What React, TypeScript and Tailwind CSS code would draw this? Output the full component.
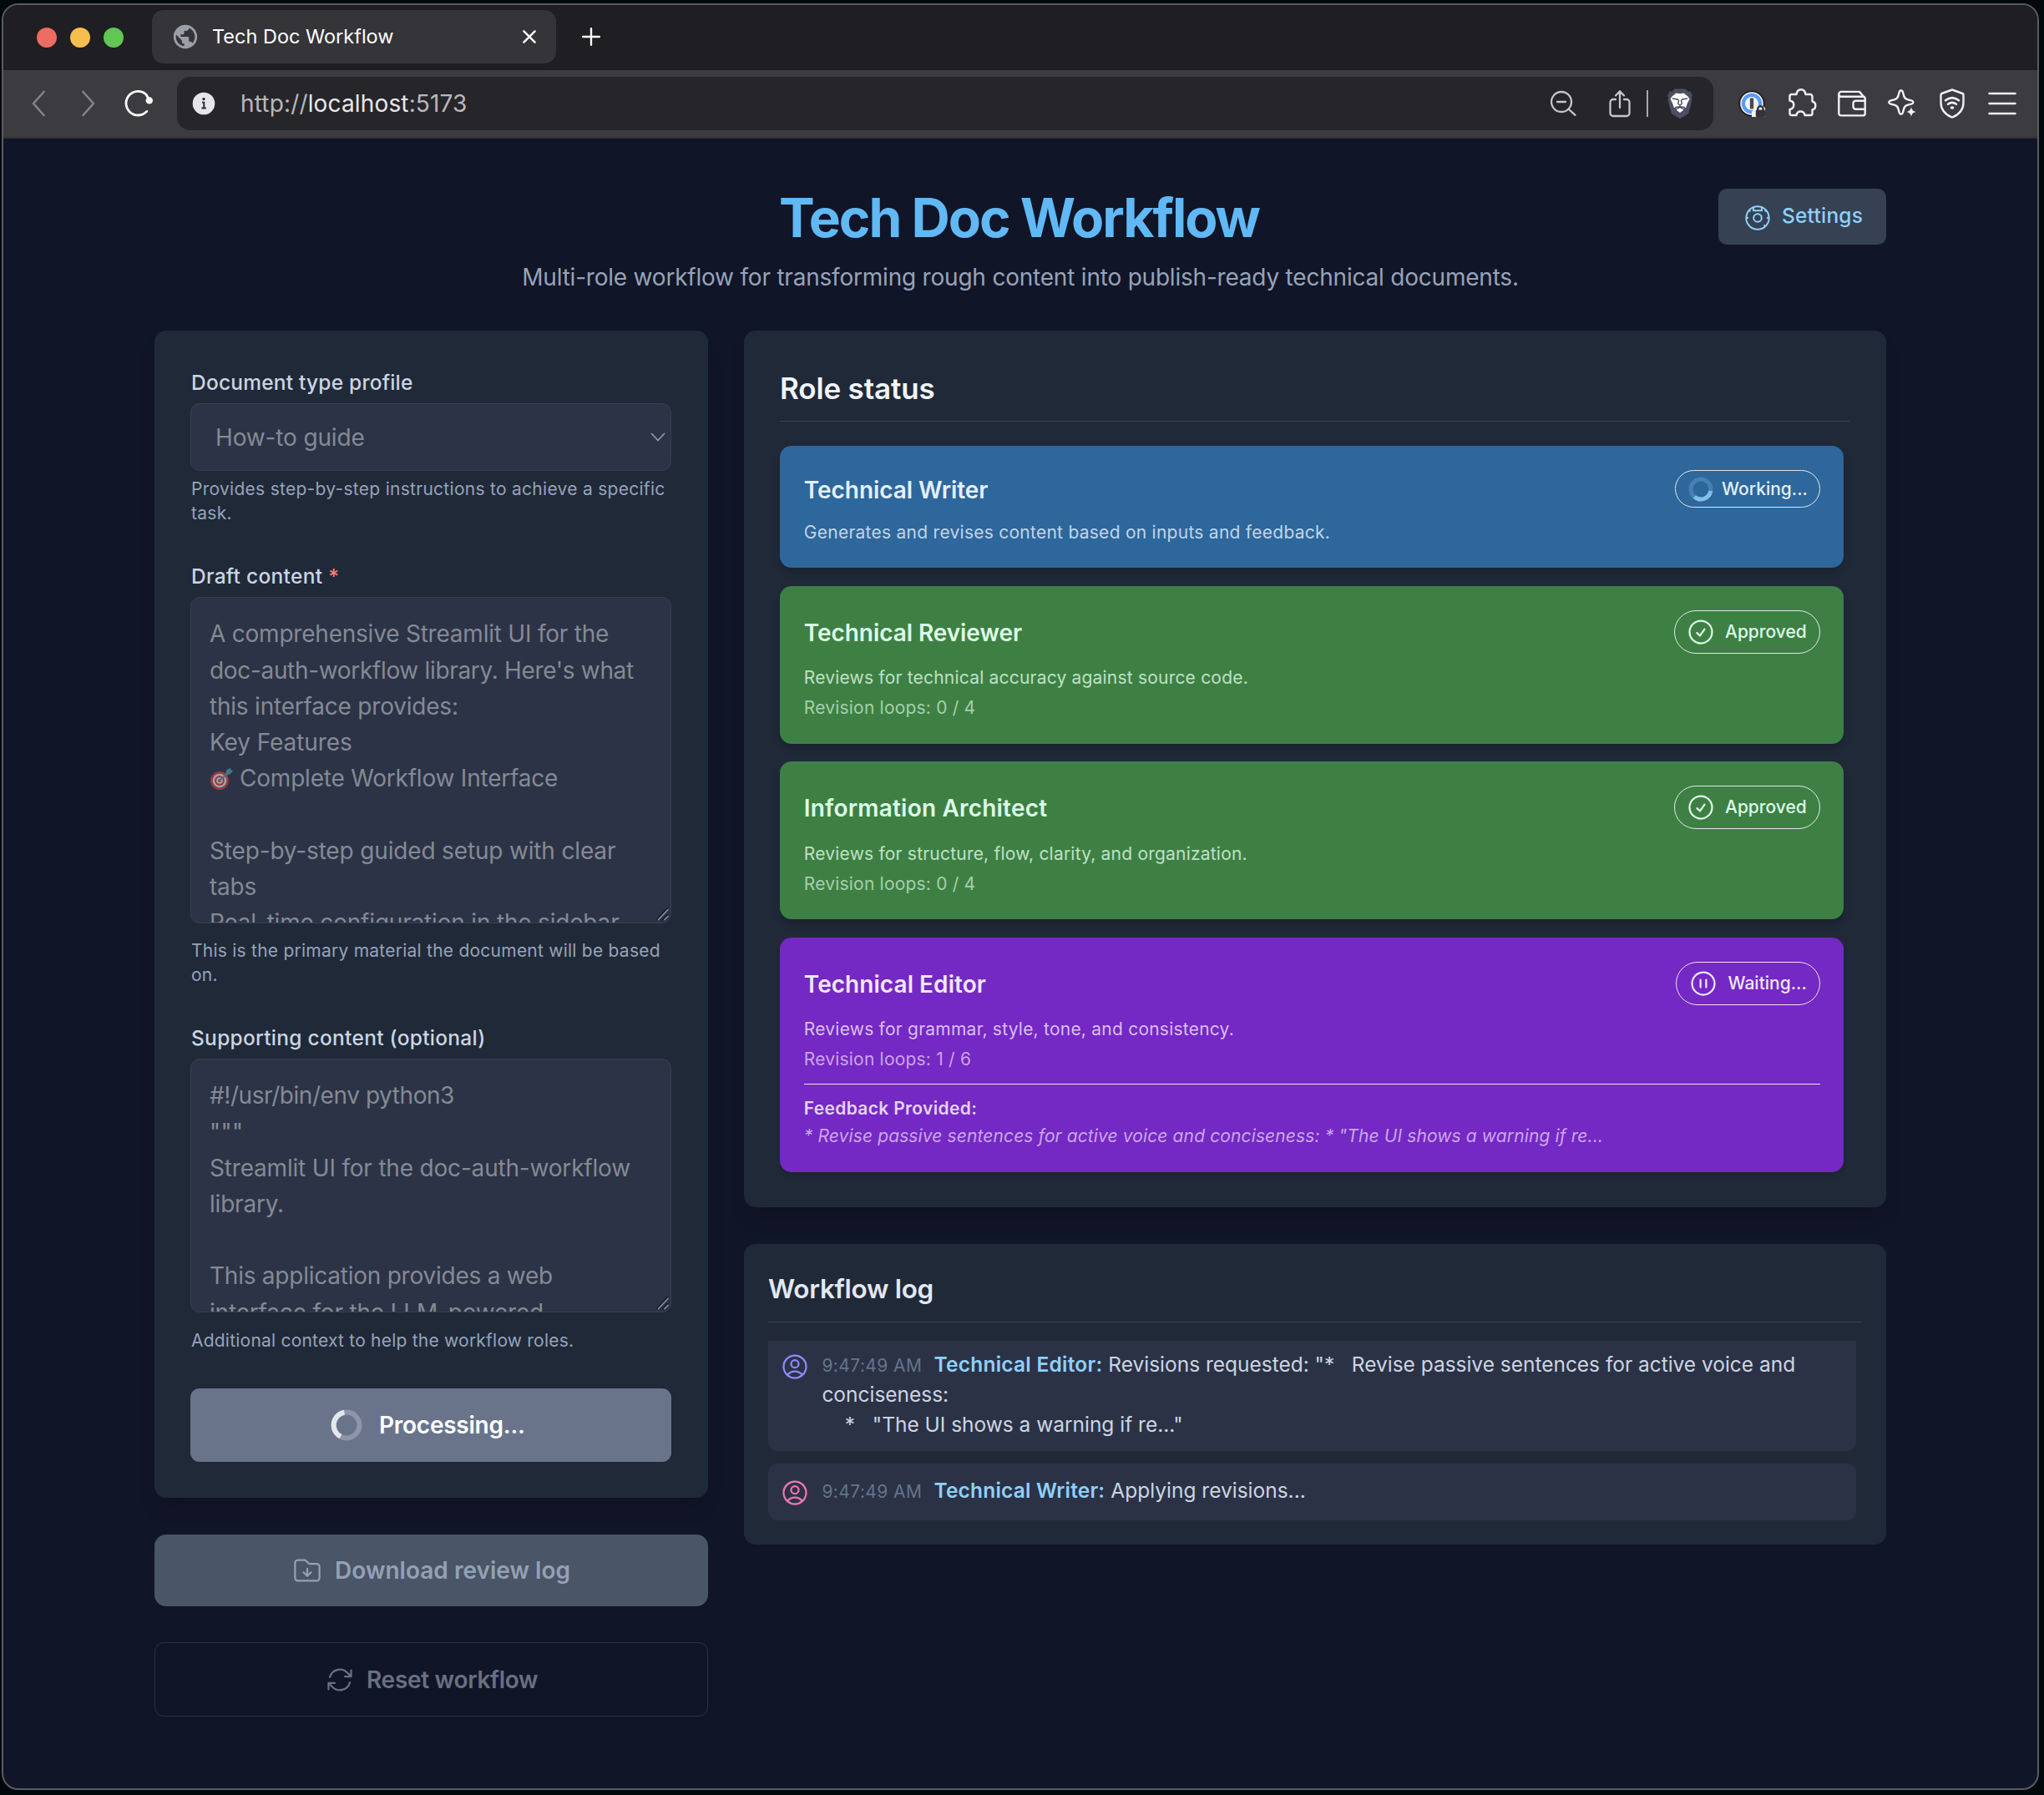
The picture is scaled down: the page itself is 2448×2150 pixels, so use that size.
import React from "react";
import {
  HiOutlineUserCircle,
  HiOutlineCheckCircle,
  HiOutlinePauseCircle,
  HiOutlineFolderArrowDown,
  HiOutlineArrowPath,
} from "react-icons/hi2";
import { MdPublic } from "react-icons/md";

/* ---------- browser chrome ---------- */

function TabStrip() {
  return (
    <div className="flex h-[78px] shrink-0 items-start bg-[#1f1e22]">
      <div className="mt-[27px] ml-[40px] flex gap-4">
        <span className="size-6 rounded-full bg-[#ed6b60]" />
        <span className="size-6 rounded-full bg-[#f5be4f]" />
        <span className="size-6 rounded-full bg-[#62c655]" />
      </div>
      <div className="mt-[6px] ml-[34px] flex h-16 w-[484px] items-center rounded-[14px] bg-[#353439] pr-[24px] pl-[23px]">
        <MdPublic className="size-[34px] text-[#9aa0a6]" />
        <span className="ml-[15px] text-[23.5px] leading-none text-white">Tech Doc Workflow</span>
        <svg viewBox="0 0 16 16" className="ml-auto size-4 text-white" fill="none" stroke="currentColor" strokeWidth="2.4" strokeLinecap="round">
          <path d="M1.4 1.4l13.2 13.2M14.6 1.4L1.4 14.6" />
        </svg>
      </div>
      <svg viewBox="0 0 22 22" className="mt-[27px] ml-[31px] size-[22px] text-white" fill="none" stroke="currentColor" strokeWidth="2.4" strokeLinecap="round">
        <path d="M11 1.2v19.6M1.2 11h19.6" />
      </svg>
    </div>
  );
}

function PuzzleIcon() {
  return (
    <svg viewBox="-2 0 36 36" className="size-9" fill="none" stroke="#f0f0f2" strokeWidth="2.4" strokeLinejoin="round">
      <path d="M3.5 7H9.5C10 3.5 12 1.2 15 1.2S20 3.5 20.5 7H26a2.5 2.5 0 0 1 2.5 2.5V15.5C31 16 32.3 18 32.3 20.5S31 25 28.5 25.5V30a2 2 0 0 1-2 2H19.5C19 29 17 27.5 14.5 27.5S10 29 9.5 32H3.5a2 2 0 0 1-2-2V25C4.5 24.5 6.3 22.5 6.3 19.5S4.5 15 1.5 14.5V9a2 2 0 0 1 2-2z" />
    </svg>
  );
}

function WalletIcon() {
  return (
    <svg viewBox="-1 -2.7 36 36" className="size-9" fill="none" stroke="#f0f0f2" strokeWidth="2.4" strokeLinejoin="round" strokeLinecap="round">
      <path d="M1.3 3.7V27A2.7 2.7 0 0 0 4 29.7H30A2.7 2.7 0 0 0 32.7 27V9.5A2.5 2.5 0 0 0 30.2 7H4A2.7 2.7 0 0 1 1.3 4.2A2.8 2.8 0 0 1 4 1.2H26L30.5 6.5" />
      <path d="M32.7 12H21.5a3 3 0 0 0-3 3v4a3 3 0 0 0 3 3H32.7" />
    </svg>
  );
}

function SparkIcon() {
  return (
    <svg viewBox="-1 0 36 36" className="size-9" fill="none" stroke="#f0f0f2" strokeWidth="2.4" strokeLinejoin="round">
      <path d="M15.8 2.2c1 0 1.7.7 2 1.7l1.5 5.3c.6 2 1.900 3.300 3.900 3.900l5.600 1.600c2 .7 2 2.900 0 3.600l-5.600 1.600c-2 .6-3.300 1.900-3.900 3.900l-1.500 5.300c-.7 2.200-3.300 2.200-4 0l-1.500-5.300c-.6-2-1.900-3.300-3.900-3.900l-5.600-1.600c-2-.7-2-2.900 0-3.600l5.600-1.600c2-.6 3.300-1.900 3.900-3.900l1.500-5.300c.3-1 1-1.700 2-1.700z" />
      <path d="M28 22.300c.9 3.600 2 4.700 5.600 5.700-3.600 1-4.700 2.100-5.600 5.700-.9-3.600-2-4.700-5.600-5.700 3.600-1 4.700-2.100 5.600-5.700z" fill="#f0f0f2" stroke="none" />
    </svg>
  );
}

function ShieldWifiIcon() {
  return (
    <svg viewBox="-3 0 36 36" className="size-9" fill="none" stroke="#f0f0f2" strokeWidth="2.4" strokeLinejoin="round" strokeLinecap="round">
      <path d="M15 1.500L27.500 6a1.500 1.500 0 0 1 1 1.400V17c0 8-4.500 13.500-12.400 17.200a2.500 2.500 0 0 1-2.200 0C6 30.500 1.500 25 1.500 17V7.400A1.500 1.500 0 0 1 2.500 6z" />
      <path d="M7 14.300c5-4 11-4 16 0M10 18.800c3.200-2.500 6.800-2.500 10 0" strokeWidth="2.6" />
      <ellipse cx="15" cy="23" rx="2.400" ry="1.800" fill="#f0f0f2" stroke="none" />
    </svg>
  );
}

function PasswordIcon() {
  return (
    <svg viewBox="-18 -18 36 36" className="size-9">
      <circle r="15.600" fill="#1d1c20" />
      <circle r="13.800" fill="#f3f5f9" />
      <circle r="10" fill="none" stroke="#5b9bf5" strokeWidth="4.400" />
      <circle r="7.800" fill="#f3f5f9" />
      <rect x="-2.200" y="-6.500" width="4.400" height="13" rx="1" fill="#4a4a4f" />
      <path d="M0 16V10L6 2.500h7l3 3V16z" fill="#f3f5f9" />
      <rect x="4.800" y="7.500" width="11.200" height="8.500" rx="1.500" fill="#343436" />
      <path d="M7.200 8.500V6.500a3.200 3.200 0 0 1 6.400 0v2" fill="none" stroke="#343436" strokeWidth="2.4" />
    </svg>
  );
}

function LionIcon() {
  return (
    <svg viewBox="0 0 30 36" className="h-9 w-[30px]">
      <path d="M8.500 0.500h13l3 3.300 3-.3 2.300 4.500-1 3 .6 3L26 27.500c-.5 1.700-1.600 3-3 4L15 36l-8-4.500c-1.400-1-2.500-2.300-3-4L.6 14l.6-3-1-3 2.300-4.500 3 .3z" fill="#4c4e61" />
      <path d="M10.500 5.500L15 6.300l4.500-.8 5 4 2 3-3 6.300-1.200 4L18.500 24 19 26l-4 3-4-3 .5-2-3.800-1.200-1.200-4-3-6.300 2-3z" fill="#fff" />
      <path d="M6 12l6 1 1.500 1.500-.8 3.800L15 20l2.300-1.700-.8-3.800L18 13l6-1M15 20v2.500M9 22.800l6-1 6 1M11.500 24.300l3.500-2 3.500 2" fill="none" stroke="#4c4e61" strokeWidth="1.400" />
    </svg>
  );
}

function Toolbar() {
  return (
    <div className="flex h-[82px] shrink-0 items-center border-b-2 border-[#323135] bg-[#3c3b3f]">
      <svg viewBox="0 0 16 32" className="ml-[34px] h-8 w-4" fill="none" stroke="#85848a" strokeWidth="2.6" strokeLinecap="round" strokeLinejoin="round">
        <path d="M14.500 2L2 16l12.500 14" />
      </svg>
      <svg viewBox="0 0 16 32" className="ml-[44px] h-8 w-4" fill="none" stroke="#85848a" strokeWidth="2.6" strokeLinecap="round" strokeLinejoin="round">
        <path d="M1.500 2L14 16 1.500 30" />
      </svg>
      <svg viewBox="-18 -18 36 36" className="ml-[33px] size-9" fill="none" stroke="#fff" strokeWidth="2.8" strokeLinecap="round">
        <path d="M10.800 9.400A14.300 14.300 0 1 1 10 -10.800L13.500 -5" />
        <circle cx="13.800" cy="-3.600" r="4.200" fill="#fff" stroke="none" />
      </svg>
      <div className="ml-[29px] flex h-16 w-[1840px] items-center rounded-2xl bg-[#26252a]">
        <svg viewBox="0 0 28 28" className="ml-[18px] size-7">
          <circle cx="14" cy="14" r="13.300" fill="#e6e5ea" />
          <circle cx="14" cy="8.600" r="1.700" fill="#26252a" />
          <path d="M12 12.600h2.300v6.600M11.500 19.500h5.300" stroke="#26252a" strokeWidth="1.900" fill="none" />
        </svg>
        <span className="ml-[30px] text-[28px] leading-none tracking-[0.15px] whitespace-nowrap text-[#b9b8be]">
          http://<span className="text-[#e8e7ec]">localhost</span>:5173
        </span>
        <svg viewBox="1 0 32 32" className="ml-auto size-8" fill="none" stroke="#c6c5ca" strokeWidth="2.3" strokeLinecap="round">
          <circle cx="14" cy="14" r="12" />
          <path d="M9 14h10M23 23l7.500 6.800" />
        </svg>
        <svg viewBox="0 0 26 34" className="ml-[38px] h-[34px] w-[26px]" fill="none" stroke="#c6c5ca" strokeWidth="2.3" strokeLinecap="round" strokeLinejoin="round">
          <path d="M8 12H5a3.500 3.500 0 0 0-3.500 3.500v13A3.500 3.500 0 0 0 5 32h16a3.500 3.500 0 0 0 3.500-3.500v-13A3.500 3.500 0 0 0 21 12h-3M13 22V2.500M8 7.500l5-5.300 5 5.300" />
        </svg>
        <span className="ml-[19px] h-8 w-[2px] bg-[#a9a8ad]" />
        <span className="mr-[25px] ml-[23px]">
          <LionIcon />
        </span>
      </div>
      <div className="ml-[28px] flex items-center gap-6">
        <PasswordIcon />
        <PuzzleIcon />
        <WalletIcon />
        <SparkIcon />
        <ShieldWifiIcon />
        <svg viewBox="0 0 36 36" className="size-9" fill="none" stroke="#f0f0f2" strokeWidth="2.6" strokeLinecap="round">
          <path d="M2.500 6h31M2.500 18h31M2.500 30h31" />
        </svg>
      </div>
    </div>
  );
}

/* ---------- page header ---------- */

function DialIcon() {
  return (
    <svg viewBox="-16 -16 32 32" className="mt-[2px] size-8" fill="none" stroke="currentColor" strokeWidth="2">
      <circle r="13.700" />
      <circle r="4.800" />
      <path d="M-5 -12.500V-8.800H5V-12.500M-14 0h3M11 0h3M-10.500 -9.500l2 1.600M10.500 -9.500l-2 1.600M9 10L7.500 8.500" />
    </svg>
  );
}

function Header() {
  return (
    <header className="grid grid-cols-[201px_1fr_201px]">
      <div />
      <div className="text-center">
        <h1 className="mr-[3px] text-[64px] leading-[72px] font-bold tracking-[-2px] text-[#60b9f5]">Tech Doc Workflow</h1>
        <p className="mt-[14px] text-[28px] leading-[43px] tracking-[-0.21px] text-[#96a3b8]">
          Multi-role workflow for transforming rough content into publish-ready technical documents.
        </p>
      </div>
      <button className="mt-px flex h-[67px] items-center rounded-[10px] bg-[#364153] pl-[31px] text-[#8fd0f9]">
        <DialIcon />
        <span className="mb-[3px] ml-[13px] text-[24.5px] leading-none font-medium tracking-[0.2px]">Settings</span>
      </button>
    </header>
  );
}

/* ---------- left column ---------- */

function Label({ children, className }: { children: React.ReactNode; className: string }) {
  return <div className={"text-[24.5px] leading-9 font-medium whitespace-nowrap text-[#cbd5e1] " + className}>{children}</div>;
}

function TargetIcon() {
  return (
    <svg viewBox="0 0 28 28" className="-mt-[3px] mr-[8px] inline-block size-7 opacity-70">
      <circle cx="12" cy="16" r="11" fill="#c4413f" />
      <circle cx="12" cy="16" r="8.200" fill="#d8d8dc" />
      <circle cx="12" cy="16" r="6" fill="#c4413f" />
      <circle cx="12" cy="16" r="3.800" fill="#d8d8dc" />
      <circle cx="12" cy="16" r="1.900" fill="#c4413f" />
      <path d="M12 16L24 5" stroke="#4c8f9c" strokeWidth="2.2" />
      <path d="M19 8.500L20 3.500 25 0.500 25.500 3 28 4.500 24.500 8.500 20 9.500z" fill="#4c93a0" />
    </svg>
  );
}

function ResizeGrip() {
  return (
    <svg viewBox="0 0 16 16" className="absolute right-px bottom-0.5 size-4" fill="none">
      <path d="M0 15L14 0M7 15L14 8" stroke="#151b28" strokeWidth="1.5" />
      <path d="M2 15L14.500 2M9.500 15L14.500 10" stroke="#8d939e" strokeWidth="1.5" />
    </svg>
  );
}

type Line = { text: string; className?: string; target?: boolean };

const draftLines: Line[] = [
  { text: "A comprehensive Streamlit UI for the", className: "tracking-[-0.22px]" },
  { text: "doc-auth-workflow library. Here's what", className: "tracking-[-0.33px]" },
  { text: "this interface provides:", className: "tracking-[-0.21px]" },
  { text: "Key Features", className: "tracking-[-0.09px]" },
  { text: "Complete Workflow Interface", className: "tracking-[-0.21px]", target: true },
  { text: "" },
  { text: "Step-by-step guided setup with clear", className: "tracking-[-0.16px]" },
  { text: "tabs", className: "tracking-[-0.2px]" },
  { text: "Real-time configuration in the sidebar", className: "tracking-[-0.19px]" },
];

const supportingLines: Line[] = [
  { text: "#!/usr/bin/env python3", className: "tracking-[-0.44px]" },
  { text: '"""', className: "tracking-[0.45px]" },
  { text: "Streamlit UI for the doc-auth-workflow", className: "tracking-[-0.19px]" },
  { text: "library.", className: "tracking-[-0.2px]" },
  { text: "" },
  { text: "This application provides a web", className: "tracking-[-0.24px]" },
  { text: "interface for the LLM-powered", className: "tracking-[-0.19px]" },
];

function Area({ lines, className }: { lines: Line[]; className: string }) {
  return (
    <div className={"relative mt-[7px] overflow-hidden rounded-[11px] border border-[#364052] bg-[#2c3346] pt-[22.4px] pl-[22px] text-[28px] leading-[43.2px] whitespace-pre text-[#848a95] " + className}>
      {lines.map((line, i) => (
        <div key={i} className="h-[43.2px]">
          {line.target && <TargetIcon />}
          <span className={line.className}>{line.text}</span>
        </div>
      ))}
      <ResizeGrip />
    </div>
  );
}

function Helper({ children, className }: { children: React.ReactNode; className: string }) {
  return <div className={"pl-px text-[21px] leading-[29px] whitespace-nowrap text-[#96a3b8] " + className}>{children}</div>;
}

function LeftColumn() {
  return (
    <div className="w-[663px] shrink-0">
      <div className="rounded-[14px] bg-[#202938] pt-[44px] pr-[44px] pb-[43px] pl-[43px] shadow-[0_16px_24px_-6px_rgba(0,0,0,0.16)]">
        <Label className="pl-px tracking-[0.21px]">Document type profile</Label>
        <div className="mt-[7px] flex h-[81px] items-center rounded-[11px] border border-[#364052] bg-[#2c3346] pr-[6px] pl-[29px] text-[28px] text-[#848a95]">
          <span className="tracking-[-0.15px]">How-to guide</span>
          <svg viewBox="0 0 18 11" className="ml-auto h-[11px] w-[18px]" fill="none" stroke="#9298a3" strokeWidth="1.8" strokeLinecap="round">
            <path d="M1.500 1.500L9 9.500l7.500-8" />
          </svg>
        </div>
        <Helper className="mt-[7px] tracking-[0.28px]">
          Provides step-by-step instructions to achieve a specific
          <br />
          task.
        </Helper>

        <Label className="mt-[43px] pl-px tracking-[0.3px]">
          Draft content <span className="text-[#f07f7b]">*</span>
        </Label>
        <Area className="h-[391px]" lines={draftLines} />
        <Helper className="mt-[18px] tracking-[0.24px]">
          This is the primary material the document will be based
          <br />
          on.
        </Helper>

        <Label className="mt-[43px] pl-px tracking-[0.28px]">Supporting content (optional)</Label>
        <Area className="h-[304px]" lines={supportingLines} />
        <Helper className="mt-[19px] tracking-[0.22px]">Additional context to help the workflow roles.</Helper>

        <div className="mt-[43px] flex h-[88px] items-center rounded-[11px] bg-[#69748b] pl-[167px] text-[28px] font-semibold text-white">
          <svg viewBox="-20 -20 40 40" className="size-10" fill="none" strokeWidth="6">
            <circle r="15.400" stroke="#8d96a8" />
            <path d="M-7 13.700A15.400 15.400 0 0 1 -2.500 -15.200" stroke="#e3e6ec" />
          </svg>
          <span className="ml-[19px] tracking-[-0.25px]">Processing...</span>
        </div>
      </div>
      <div className="mt-[44px] flex h-[86px] items-center rounded-[14px] bg-[#4a5567] pl-[165px] text-[28px] font-semibold text-[#93a1b6]">
        <HiOutlineFolderArrowDown className="size-9" />
        <span className="ml-[15px] tracking-[0.02px]">Download review log</span>
      </div>
      <div className="mt-[43px] flex h-[89px] items-center rounded-[11px] border border-[#2b3142] pl-[203px] text-[28px] font-semibold text-[#6a7080]">
        <HiOutlineArrowPath className="size-9" />
        <span className="ml-[14px] tracking-[-0.29px]">Reset workflow</span>
      </div>
    </div>
  );
}

/* ---------- right column ---------- */

function Title({ children, className = "" }: { children: React.ReactNode; className?: string }) {
  return <h3 className={"pt-[2px] text-[28px] leading-9 font-semibold " + className}>{children}</h3>;
}

function ApprovedBadge() {
  return (
    <span className="flex h-[52.2px] w-[175.5px] items-center rounded-full border border-[#e5e7eb] pl-[13.5px] text-[21px] font-medium">
      <HiOutlineCheckCircle className="size-9" />
      <span className="ml-[11px]">Approved</span>
    </span>
  );
}

function Card({ className, children }: { className: string; children: React.ReactNode }) {
  return <section className={"rounded-[14px] pt-[28.8px] pr-[28px] pb-[27.8px] pl-[28.8px] " + className}>{children}</section>;
}

function Description({ className, children }: { className: string; children: React.ReactNode }) {
  return <p className={"mt-[15.4px] text-[21px] leading-[28.8px] " + className}>{children}</p>;
}

function Loops({ className, children }: { className: string; children: React.ReactNode }) {
  return <p className={"mt-[7.2px] text-[21px] leading-[28.8px] tracking-[0.2px] " + className}>{children}</p>;
}

function RoleCards() {
  return (
    <div className="mt-[29.4px] mr-[8px] flex flex-col gap-[21.6px]">
      <Card className="bg-[#2d679c] text-[#e3f0fc] shadow-[0_7px_11px_-2px_rgba(0,0,0,0.22)]">
        <div className="flex items-center justify-between">
          <Title className="tracking-[-0.05px]">Technical Writer</Title>
          <span className="flex h-[45px] w-[174px] items-center rounded-full border border-[#e5e7eb] pl-[14px] text-[21px] font-medium">
            <svg viewBox="-16 -16 32 32" className="size-8" fill="none" strokeWidth="5">
              <circle r="12" stroke="#4781b3" />
              <path d="M11.800 2A12 12 0 0 1 -7.700 9.200" stroke="#7fbfe8" />
            </svg>
            <span className="ml-[9px]">Working...</span>
          </span>
        </div>
        <Description className="tracking-[0.26px] text-[#c0d5ea]">Generates and revises content based on inputs and feedback.</Description>
      </Card>

      <Card className="bg-[#3e8044] text-[#dcfce7] shadow-[0_7px_11px_-2px_rgba(0,0,0,0.22)]">
        <div className="flex items-center justify-between">
          <Title className="tracking-[-0.07px]">Technical Reviewer</Title>
          <ApprovedBadge />
        </div>
        <Description className="tracking-[0.2px] text-[#bfe0c5]">Reviews for technical accuracy against source code.</Description>
        <Loops className="text-[#a5cfab]">Revision loops: 0 / 4</Loops>
      </Card>

      <Card className="bg-[#3e8044] text-[#dcfce7] shadow-[0_7px_11px_-2px_rgba(0,0,0,0.22)]">
        <div className="flex items-center justify-between">
          <Title className="tracking-[0.2px]">Information Architect</Title>
          <ApprovedBadge />
        </div>
        <Description className="tracking-[0.21px] text-[#bfe0c5]">Reviews for structure, flow, clarity, and organization.</Description>
        <Loops className="text-[#a5cfab]">Revision loops: 0 / 4</Loops>
      </Card>

      <Card className="bg-[#7428c4] text-[#f1e6fd] shadow-[0_4px_6px_-2px_rgba(0,0,0,0.2)]">
        <div className="flex items-center justify-between">
          <Title className="tracking-[0.05px]">Technical Editor</Title>
          <span className="flex h-[52.2px] w-[173px] items-center rounded-full border border-[#e5e7eb] pl-[13.5px] text-[21px] font-medium">
            <HiOutlinePauseCircle className="size-9" />
            <span className="ml-[12px]">Waiting...</span>
          </span>
        </div>
        <Description className="tracking-[0.23px] text-[#d9bff3]">Reviews for grammar, style, tone, and consistency.</Description>
        <Loops className="text-[#cba5ee]">Revision loops: 1 / 6</Loops>
        <div className="mt-[14.4px] border-t border-[#e5e7eb] pt-[14.4px]">
          <p className="text-[21px] leading-[28.8px] font-semibold tracking-[0.33px] text-[#e5d3f8]">Feedback Provided:</p>
          <p className="mt-[4.4px] text-[21px] leading-[28.8px] tracking-[0.12px] text-[#cba5ee] italic">
            * Revise passive sentences for active voice and conciseness: * "The UI shows a warning if re...
          </p>
        </div>
      </Card>
    </div>
  );
}

type LogEntryProps = {
  role: string;
  roleClass: string;
  iconClass: string;
  className: string;
  children: React.ReactNode;
};

function LogEntry({ role, roleClass, iconClass, className, children }: LogEntryProps) {
  return (
    <div className={"flex bg-[#2b3246] pl-[14.4px] " + className}>
      <HiOutlineUserCircle className={"mt-[3px] size-9 shrink-0 " + iconClass} />
      <div className="ml-[14px] text-[24.5px] leading-9 whitespace-pre text-[#cbd5e1]">
        <span className="mr-[14px] text-[21px] leading-none tracking-[0.42px] text-[#64748b]">9:47:49 AM</span>
        <span className={"font-semibold text-[#8fd0f9] " + roleClass}>{role}</span>
        {children}
      </div>
    </div>
  );
}

function RightColumn() {
  return (
    <div className="ml-[43px] w-[1368px] shrink-0">
      <div className="h-[1050px] rounded-[14px] bg-[#202938] pt-[44px] pr-[43px] pl-[43px] shadow-[0_16px_24px_-6px_rgba(0,0,0,0.16)]">
        <h2 className="border-b border-[#3a4353] pb-[14px] text-[35px] leading-[50px] font-semibold tracking-[-0.15px] text-[#f1f5f9]">Role status</h2>
        <RoleCards />
      </div>
      <div className="mt-[44px] h-[360px] rounded-[14px] bg-[#202938] px-[29px] pt-[29px]">
        <h2 className="border-b border-[#3a4353] pb-[14px] text-[31.5px] leading-[50px] font-semibold tracking-[-0.28px] text-[#e2e8f0]">Workflow log</h2>
        <div className="mt-[22px] mr-[7px]">
          <LogEntry role="Technical Editor:" roleClass="tracking-[0.24px]" iconClass="text-[#8b8cf8]" className="h-[132px] rounded-b-[11px] pt-[10px]">
            <span className="tracking-[-0.02px]">{' Revisions requested: "*   Revise passive sentences for active voice and\nconciseness:\n    *   "The UI shows a warning if re..."'}</span>
          </LogEntry>
          <LogEntry role="Technical Writer:" roleClass="tracking-[0.2px]" iconClass="text-[#ec77b4]" className="mt-[15px] h-[68px] rounded-[11px] pt-[14px]">
            <span>{" Applying revisions..."}</span>
          </LogEntry>
        </div>
      </div>
    </div>
  );
}

export default function App() {
  return (
    <div className="h-[2150px] w-[2448px] bg-[#02090d] pt-[4px] pl-[2px] font-['Inter',sans-serif]">
      <div className="flex h-[2140px] w-[2440px] flex-col overflow-hidden rounded-[20px] border-2 border-[#5b5b5f] bg-[#111528]">
        <TabStrip />
        <Toolbar />
        <main className="px-[181px] pt-[59px]">
          <Header />
          <div className="mt-[42px] flex items-start">
            <LeftColumn />
            <RightColumn />
          </div>
        </main>
      </div>
    </div>
  );
}
